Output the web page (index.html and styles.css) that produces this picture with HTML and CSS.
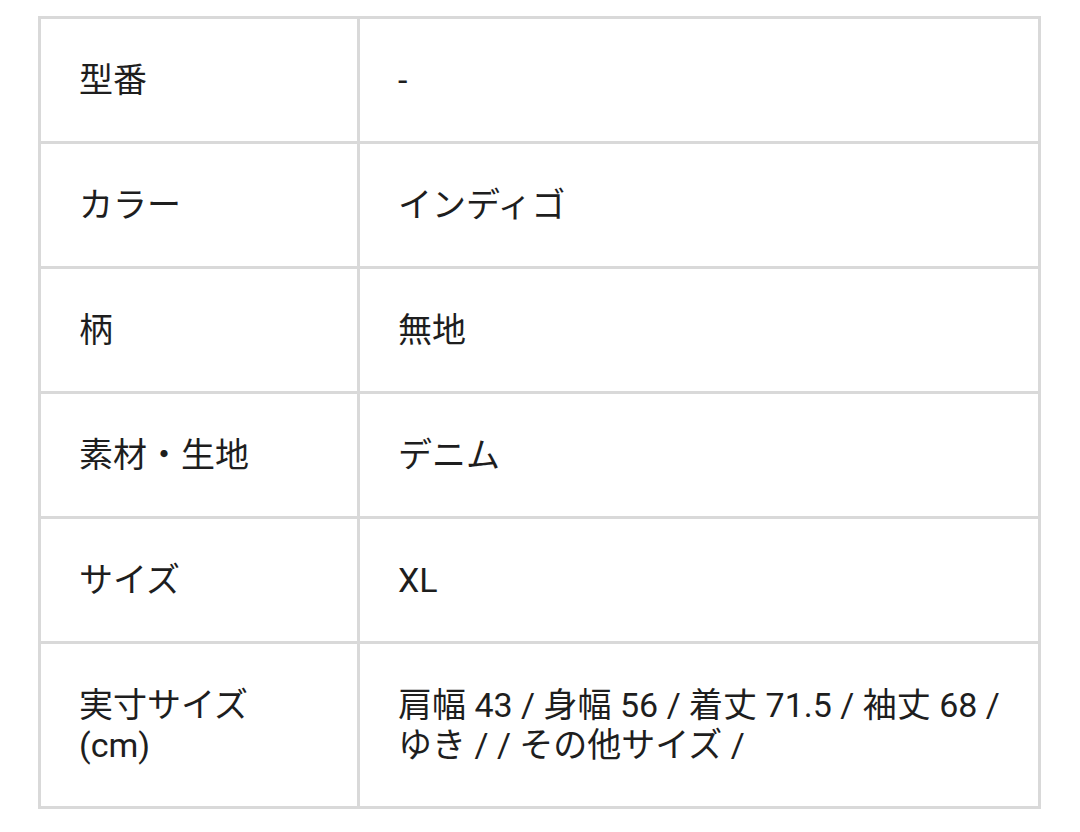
FILE: index.html
```html
<!DOCTYPE html>
<html lang="ja">
<head>
<meta charset="utf-8">
<link rel="stylesheet" href="styles.css">
</head>
<body>
<div class="spec">
  <div class="label">型番</div><div class="value">-</div>
  <div class="label">カラー</div><div class="value">インディゴ</div>
  <div class="label">柄</div><div class="value">無地</div>
  <div class="label">素材・生地</div><div class="value">デニム</div>
  <div class="label">サイズ</div><div class="value">XL</div>
  <div class="label last">実寸サイズ<br>(cm)</div><div class="value last">肩幅 43 / 身幅 56 / 着丈 71.5 / 袖丈 68 / ゆき / / その他サイズ /</div>
</div>
</body>
</html>
```
FILE: styles.css
```css
html, body {
  margin: 0;
  padding: 0;
  background: #ffffff;
}
body {
  font-family: Roboto, "Noto Sans CJK JP", sans-serif;
  color: #1e1e1e;
  font-size: 34px;
  line-height: 40px;
}
.spec {
  margin: 16px 39px 0 38px;
  border: 3px solid #d9d9d9;
  display: grid;
  grid-template-columns: 319px 1fr;
}
.label, .value {
  padding: 41px 30px 41px 38px;
  border-bottom: 3px solid #d9d9d9;
  display: flex;
  align-items: center;
}
.label {
  border-right: 3px solid #d9d9d9;
}
.value {
  padding-left: 38px;
}
.last {
  border-bottom: none;
}
```
